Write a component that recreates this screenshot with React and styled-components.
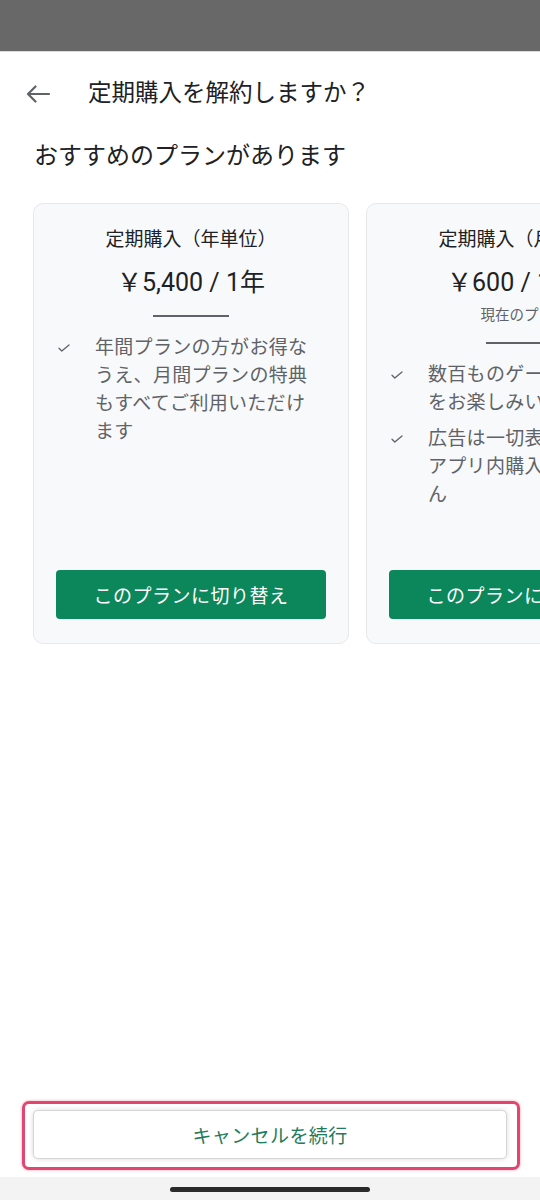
import React from 'react';
import styled, { createGlobalStyle } from 'styled-components';

const GlobalStyle = createGlobalStyle`
  html, body {
    margin: 0;
    padding: 0;
    background: #ffffff;
  }
  body {
    font-family: Roboto, "Noto Sans CJK JP", "Noto Sans", sans-serif;
    color: #202124;
  }
`;

const plans = [
  {
    title: '定期購入（年単位）',
    price: '￥5,400 / 1年',
    items: ['年間プランの方がお得なうえ、月間プランの特典もすべてご利用いただけます'],
  },
  {
    title: '定期購入（月単位）',
    price: '￥600 / 1か月',
    note: '現在のプラン',
    items: [
      '数百ものゲームやアプリをお楽しみいただけます',
      '広告は一切表示されず、アプリ内購入もありません',
    ],
  },
];

const BackArrow = () => (
  <svg width="24" height="18" viewBox="0 0 24 18" fill="none">
    <path d="M2 9H23M9.5 1.5L2 9L9.5 16.5" stroke="#5f6368" strokeWidth="2.2" strokeLinecap="round" strokeLinejoin="round" />
  </svg>
);

const Check = () => (
  <svg width="12" height="8" viewBox="0 0 12 8" fill="none">
    <path d="M1 4.2L3.8 7L11 1" stroke="#5f6368" strokeWidth="1.3" strokeLinecap="round" strokeLinejoin="round" />
  </svg>
);

const PlanCard = ({plan}) => (
  <Card>
    <CardTitle>{plan.title}</CardTitle>
    <Price>{plan.price}</Price>
    {plan.note ? <Note>{plan.note}</Note> : null}
    <Divider />
    <FeatureList>
      {plan.items.map((item) => (
        <Feature key={item}>
          <CheckBox><Check /></CheckBox>
          <FeatureText>{item}</FeatureText>
        </Feature>
      ))}
    </FeatureList>
    <SwitchButton>このプランに切り替え</SwitchButton>
  </Card>
);

const App = () => (
  <Page>
    <GlobalStyle />
    <StatusBar />
    <Header>
      <BackButton><BackArrow /></BackButton>
      <Title>定期購入を解約しますか？</Title>
    </Header>
    <Subtitle>おすすめのプランがあります</Subtitle>
    <CardRow>
      {plans.map((plan) => <PlanCard key={plan.title} plan={plan} />)}
    </CardRow>
    <Spacer />
    <Highlight>
      <CancelButton>キャンセルを続行</CancelButton>
    </Highlight>
    <NavBar>
      <Handle />
    </NavBar>
  </Page>
);

export default App;


const Page = styled.div`
  width: 540px;
  height: 1200px;
  display: flex;
  flex-direction: column;
  overflow: hidden;
  background: #ffffff;
`;

const StatusBar = styled.div`
  height: 52px;
  flex-shrink: 0;
  background: #686868;
  border-bottom: 1px solid #dcdcdc;
  box-sizing: border-box;
`;

const Header = styled.div`
  display: flex;
  align-items: center;
  padding: 25px 0 0 26px;
  height: 32px;
`;

const BackButton = styled.div`
  width: 24px;
  height: 18px;
  display: flex;
  margin-right: 38px;
  margin-top: 2px;
`;

const Title = styled.h1`
  margin: 0;
  font-size: 23.5px;
  line-height: 32px;
  font-weight: 400;
  color: #202124;
`;

const Subtitle = styled.h2`
  margin: 31px 0 0 34px;
  font-size: 24px;
  line-height: 32px;
  font-weight: 400;
  color: #202124;
`;

const CardRow = styled.div`
  display: flex;
  gap: 17px;
  padding-left: 33px;
  margin-top: 31px;
`;

const Card = styled.div`
  flex: 0 0 316px;
  height: 441px;
  box-sizing: border-box;
  display: flex;
  flex-direction: column;
  align-items: center;
  padding: 24px 22px 24px;
  background: #f8f9fa;
  border: 1px solid #e6e8eb;
  border-radius: 10px;
`;

const CardTitle = styled.div`
  font-size: 19px;
  line-height: 24px;
  color: #202124;
`;

const Price = styled.div`
  margin-top: 15px;
  font-size: 25px;
  line-height: 32px;
  font-weight: 400;
  color: #202124;
`;

const Note = styled.div`
  margin-top: 7px;
  font-size: 14.5px;
  line-height: 20px;
  color: #5f6368;
`;

const Divider = styled.div`
  width: 76px;
  height: 2px;
  margin-top: 16px;
  background: #5f6368;
  flex-shrink: 0;
`;

const FeatureList = styled.div`
  align-self: stretch;
  display: flex;
  flex-direction: column;
  gap: 8px;
  margin-top: 17px;
  margin-left: 2px;
  padding-right: 14px;
`;

const Feature = styled.div`
  display: flex;
  align-items: flex-start;
`;

const CheckBox = styled.div`
  width: 37px;
  height: 28px;
  flex-shrink: 0;
  display: flex;
  align-items: center;
`;

const FeatureText = styled.div`
  font-size: 19px;
  line-height: 28px;
  letter-spacing: 0.3px;
  color: #5f6368;
`;

const SwitchButton = styled.button`
  margin-top: auto;
  align-self: stretch;
  height: 49px;
  border: none;
  border-radius: 4px;
  background: #0b875b;
  color: #ffffff;
  font-family: inherit;
  font-size: 19px;
  letter-spacing: 0.5px;
  cursor: pointer;
`;

const Spacer = styled.div`
  flex: 1;
`;

const Highlight = styled.div`
  margin: 0 20px 7px 22px;
  padding: 6px 10px 8px 8px;
  border: 3px solid #e2456f;
  border-radius: 7px;
  box-shadow: 0 0 3px rgba(226, 69, 111, 0.5);
  background: #ffffff;
`;

const CancelButton = styled.button`
  width: 100%;
  height: 49px;
  display: block;
  border: 1px solid #d6d6d6;
  border-radius: 5px;
  background: #ffffff;
  box-shadow: 0 0 5px rgba(0, 0, 0, 0.15);
  color: #1e7b5b;
  font-family: inherit;
  font-size: 19px;
  letter-spacing: 0.4px;
  cursor: pointer;
`;

const NavBar = styled.div`
  height: 23px;
  flex-shrink: 0;
  background: #f3f3f3;
  display: flex;
  justify-content: center;
  padding-top: 10px;
  box-sizing: border-box;
`;

const Handle = styled.div`
  width: 200px;
  height: 5px;
  border-radius: 3px;
  background: #2a2a2a;
`;
